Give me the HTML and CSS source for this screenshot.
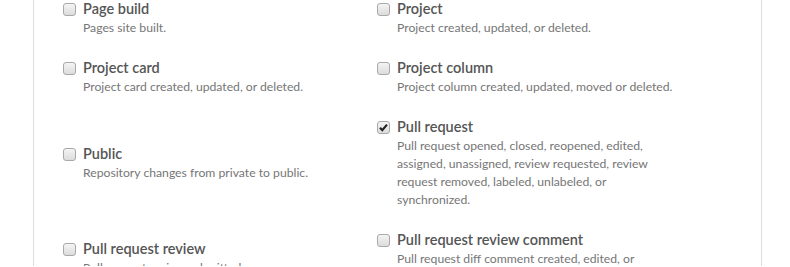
FILE: index.html
```
<!DOCTYPE html>
<html lang="en">
<head>
    <meta charset="UTF-8">
    <title>Webhook events</title>
    <link rel="stylesheet" href="styles.css">
</head>
<body>
<div class="panel">
    <div class="event-list">
        <label class="event">
            <span class="check"></span>
            <span class="event-text">
                <span class="event-name">Page build</span>
                <span class="event-desc">Pages site built.</span>
            </span>
        </label>
        <label class="event">
            <span class="check"></span>
            <span class="event-text">
                <span class="event-name">Project</span>
                <span class="event-desc">Project created, updated, or deleted.</span>
            </span>
        </label>
        <label class="event">
            <span class="check"></span>
            <span class="event-text">
                <span class="event-name">Project card</span>
                <span class="event-desc">Project card created, updated, or deleted.</span>
            </span>
        </label>
        <label class="event">
            <span class="check"></span>
            <span class="event-text">
                <span class="event-name">Project column</span>
                <span class="event-desc">Project column created, updated, moved or deleted.</span>
            </span>
        </label>
        <label class="event">
            <span class="check"></span>
            <span class="event-text">
                <span class="event-name">Public</span>
                <span class="event-desc">Repository changes from private to public.</span>
            </span>
        </label>
        <label class="event">
            <span class="check checked">
                <svg viewBox="0 0 13 13" width="13" height="13"><path d="M3 6.8l2.3 2.4L10 3.6" fill="none" stroke="#222" stroke-width="2.2"/></svg>
            </span>
            <span class="event-text">
                <span class="event-name">Pull request</span>
                <span class="event-desc">Pull request opened, closed, reopened, edited, assigned, unassigned, review requested, review request removed, labeled, unlabeled, or synchronized.</span>
            </span>
        </label>
        <label class="event">
            <span class="check"></span>
            <span class="event-text">
                <span class="event-name">Pull request review</span>
                <span class="event-desc">Pull request review submitted.</span>
            </span>
        </label>
        <label class="event">
            <span class="check"></span>
            <span class="event-text">
                <span class="event-name">Pull request review comment</span>
                <span class="event-desc">Pull request diff comment created, edited, or deleted.</span>
            </span>
        </label>
    </div>
</div>
</body>
</html>
```

FILE: styles.css
```
html, body { margin: 0; padding: 0; background: #fff; overflow: hidden; }
body { font-family: Lato, "Open Sans", Arial, sans-serif; }
.panel {
    margin-left: 33px;
    width: 729px;
    height: 267px;
    border-left: 1px solid #ddd;
    border-right: 1px solid #ddd;
    padding-left: 29px;
    box-sizing: border-box;
}
.event-list {
    display: grid;
    grid-template-columns: 300px 300px;
    column-gap: 14px;
    row-gap: 21px;
    align-items: center;
    margin-top: -1px;
}
.event { display: flex; align-items: flex-start; cursor: pointer; }
.check {
    flex: none;
    width: 13px;
    height: 13px;
    margin: 4px 7px 0 0;
    box-sizing: border-box;
    border: 1px solid #a9a9a9;
    border-radius: 3px;
    background: linear-gradient(#f4f4f4, #dcdcdc);
    position: relative;
}
.check svg { position: absolute; left: -1px; top: -1px; }
.event-text { display: flex; flex-direction: column; max-width: 282px; }
.event-name { font-size: 14.5px; line-height: 20px; font-weight: 600; color: #555; }
.event-desc { font-size: 12.2px; line-height: 18px; color: #767676; }
```
